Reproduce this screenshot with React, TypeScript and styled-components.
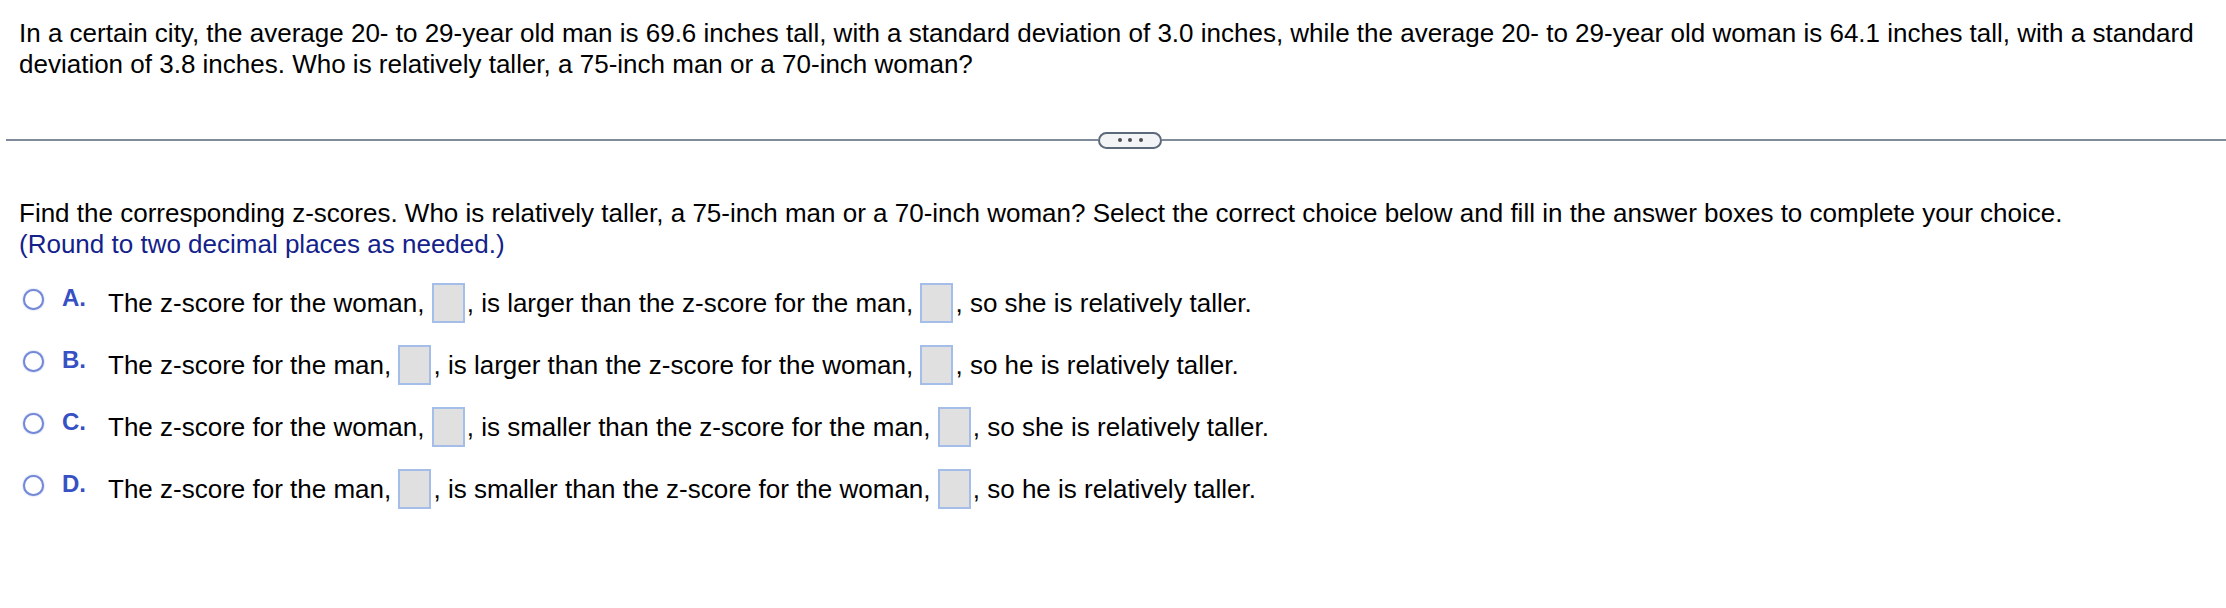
import { FC } from "react";
import styled, { createGlobalStyle } from "styled-components";

interface IOption {
	letter: string;
	parts: string[];
}

const options: IOption[] = [
	{
		letter: "A.",
		parts: [
			"The z-score for the woman, ",
			", is larger than the z-score for the man, ",
			", so she is relatively taller.",
		],
	},
	{
		letter: "B.",
		parts: [
			"The z-score for the man, ",
			", is larger than the z-score for the woman, ",
			", so he is relatively taller.",
		],
	},
	{
		letter: "C.",
		parts: [
			"The z-score for the woman, ",
			", is smaller than the z-score for the man, ",
			", so she is relatively taller.",
		],
	},
	{
		letter: "D.",
		parts: [
			"The z-score for the man, ",
			", is smaller than the z-score for the woman, ",
			", so he is relatively taller.",
		],
	},
];

const App: FC = () => {
	return (
		<>
			<GlobalStyle />
			<Page>
				<Question>
					In a certain city, the average 20- to 29-year old man is 69.6 inches tall, with a
					standard deviation of 3.0 inches, while the average 20- to 29-year old woman is
					64.1 inches tall, with a standard deviation of 3.8 inches. Who is relatively
					taller, a 75-inch man or a 70-inch woman?
				</Question>

				<Divider>
					<LeftRule />
					<MoreButton type="button" aria-label="more">
						<Dot />
						<Dot />
						<Dot />
					</MoreButton>
					<RightRule />
				</Divider>

				<Task>
					<Instruction>
						Find the corresponding z-scores. Who is relatively taller, a 75-inch man or a
						70-inch woman? Select the correct choice below and fill in the answer boxes to
						complete your choice.
					</Instruction>
					<Hint>(Round to two decimal places as needed.)</Hint>
				</Task>

				<OptionList>
					{options.map((option) => (
						<OptionRow key={option.letter}>
							<Radio />
							<Letter>{option.letter}</Letter>
							<OptionText>
								{option.parts[0]}
								<AnswerBox />
								{option.parts[1]}
								<AnswerBox />
								{option.parts[2]}
							</OptionText>
						</OptionRow>
					))}
				</OptionList>
			</Page>
		</>
	);
};

export default App;

const GlobalStyle = createGlobalStyle`
	html, body {
		margin: 0;
		padding: 0;
		background: #fff;
	}

	body {
		font-family: "Liberation Sans", Arial, Helvetica, sans-serif;
		color: #000;
		overflow: hidden;
	}
`;

const Page = styled.div`
	width: 2226px;
	height: 608px;
	display: flex;
	flex-direction: column;
	padding-top: 18px;
	box-sizing: border-box;
`;

const Question = styled.p`
	margin: 0;
	padding: 0 20px 0 19px;
	font-size: 26px;
	line-height: 31px;
`;

const Divider = styled.div`
	display: flex;
	align-items: center;
	height: 16px;
	margin-top: 52px;
	padding-left: 6px;
`;

const LeftRule = styled.div`
	width: 1092px;
	height: 2px;
	background: #7f8b9b;
`;

const RightRule = styled.div`
	flex: 1;
	height: 2px;
	background: #7f8b9b;
`;

const MoreButton = styled.button`
	width: 64px;
	height: 17px;
	display: flex;
	align-items: center;
	justify-content: center;
	gap: 6.5px;
	padding: 0;
	border: 2.5px solid #5b6979;
	border-radius: 9px;
	background: #f3f4f6;
	cursor: pointer;
`;

const Dot = styled.span`
	width: 4px;
	height: 4px;
	border-radius: 50%;
	background: #4a4d52;
`;

const Task = styled.div`
	margin-top: 50px;
	padding-left: 19px;
	font-size: 26px;
	line-height: 31px;
`;

const Instruction = styled.p`
	margin: 0;
`;

const Hint = styled.p`
	margin: 0;
	color: #14218a;
`;

const OptionList = styled.ul`
	list-style: none;
	margin: 23px 0 0;
	padding: 0 0 0 23px;
	display: flex;
	flex-direction: column;
	gap: 22px;
`;

const OptionRow = styled.li`
	display: flex;
	align-items: flex-start;
	height: 40px;
`;

const Radio = styled.span`
	width: 21px;
	height: 21px;
	margin-top: 6px;
	box-sizing: border-box;
	border: 2.5px solid #7489d8;
	border-radius: 50%;
	box-shadow: 0 0 1.5px rgba(100, 125, 210, 0.8);
	background: #fff;
	flex-shrink: 0;
`;

const Letter = styled.span`
	width: 46px;
	margin: 3px 0 0 18px;
	font-size: 24px;
	font-weight: 700;
	line-height: 24px;
	color: #3750c4;
`;

const OptionText = styled.span`
	font-size: 26px;
	line-height: 40px;
	white-space: nowrap;
`;

const AnswerBox = styled.span`
	display: inline-block;
	vertical-align: top;
	width: 33px;
	height: 40px;
	box-sizing: border-box;
	margin: 0 2px 0 0;
	border: 2px solid #a4bde9;
	background: #e0e0e0;
`;
